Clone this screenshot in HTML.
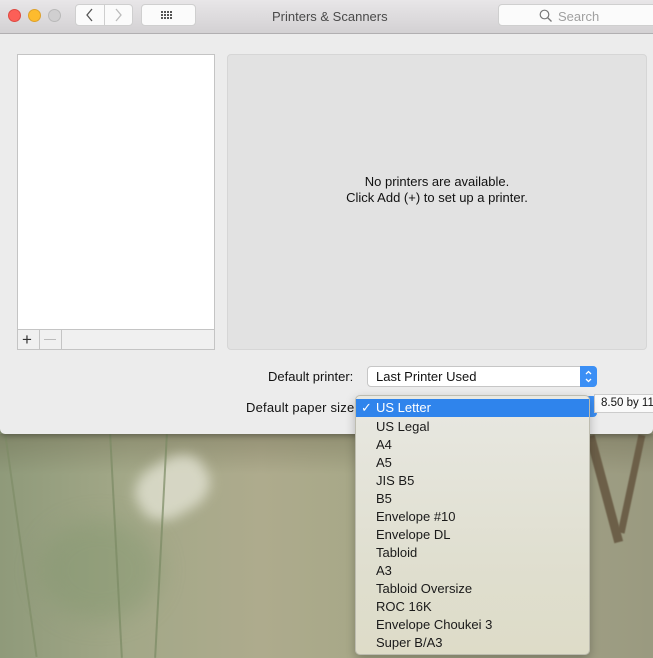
<!DOCTYPE html>
<html><head><meta charset="utf-8"><style>
*{margin:0;padding:0;box-sizing:border-box}
body{width:653px;height:658px;overflow:hidden;position:relative;font-family:"Liberation Sans",sans-serif;font-size:13px;color:#222;
background:linear-gradient(90deg,#8f9a7a 0%,#a3a888 20%,#aeab8d 40%,#a5a786 60%,#a09f84 85%,#9a9a80 100%)}
.abs{position:absolute}
.win{left:0;top:0;width:653px;height:434px;background:#ececec;border-radius:0 0 5px 5px;box-shadow:0 2px 6px rgba(0,0,0,.3)}
.tb{left:0;top:0;width:653px;height:34px;background:linear-gradient(#e8e6e8,#d3d1d3);border-bottom:1px solid #b1afb1}
.dot{width:13px;height:13px;border-radius:50%;top:9px}
.btn{background:#fbfbfb;border:1px solid #cfcfcf;border-radius:4px;height:22px;top:4px}
</style></head><body>
<div class="abs" style="left:0;top:434px;width:653px;height:40px;background:linear-gradient(rgba(100,95,70,.35),rgba(0,0,0,0))"></div>
<div class="abs" style="left:40px;top:520px;width:120px;height:100px;background:rgba(130,150,110,.45);border-radius:50%;filter:blur(12px)"></div>
<div class="abs" style="left:135px;top:460px;width:75px;height:55px;background:rgba(230,230,215,.75);border-radius:40%;filter:blur(6px);transform:rotate(-30deg)"></div>
<div class="abs" style="left:115px;top:434px;width:2px;height:224px;background:#7b8a64;opacity:.7;transform:rotate(-3deg)"></div>
<div class="abs" style="left:160px;top:434px;width:2px;height:224px;background:#7b8a64;opacity:.7;transform:rotate(3deg)"></div>
<div class="abs" style="left:20px;top:434px;width:2px;height:224px;background:#7b8a64;opacity:.6;transform:rotate(-8deg)"></div>
<div class="abs" style="left:600px;top:434px;width:9px;height:110px;background:#6c5f48;transform:rotate(-15deg);filter:blur(.5px)"></div>
<div class="abs" style="left:628px;top:434px;width:7px;height:100px;background:#6c5f48;transform:rotate(12deg);filter:blur(.5px)"></div>
<div class="abs win">
<div class="abs tb">
<div class="abs dot" style="left:8px;background:#fc5f57;border:1px solid #de4a42"></div>
<div class="abs dot" style="left:28px;background:#fdbb2e;border:1px solid #dea12a"></div>
<div class="abs dot" style="left:48px;background:#d0cfd0;border:1px solid #b9b9b9"></div>
<div class="abs btn" style="left:75px;width:58px"></div>
<div class="abs" style="left:104px;top:5px;width:1px;height:20px;background:#cfcfcf"></div>
<svg class="abs" style="left:84px;top:8px" width="12" height="14"><path d="M8 1L3 7L8 13" stroke="#555" fill="none" stroke-width="1.3"/></svg>
<svg class="abs" style="left:112px;top:8px" width="12" height="14"><path d="M4 1L9 7L4 13" stroke="#bbb" fill="none" stroke-width="1.3"/></svg>
<div class="abs btn" style="left:141px;width:55px"></div>
<svg class="abs" style="left:161px;top:11px" width="14" height="10"><g fill="#555"><rect x="0" y="0" width="2" height="2"/><rect x="3" y="0" width="2" height="2"/><rect x="6" y="0" width="2" height="2"/><rect x="9" y="0" width="2" height="2"/><rect x="0" y="3" width="2" height="2"/><rect x="3" y="3" width="2" height="2"/><rect x="6" y="3" width="2" height="2"/><rect x="9" y="3" width="2" height="2"/><rect x="0" y="6" width="2" height="2"/><rect x="3" y="6" width="2" height="2"/><rect x="6" y="6" width="2" height="2"/><rect x="9" y="6" width="2" height="2"/></g></svg>
<div class="abs" style="left:272px;top:9px;color:#4a4a4a">Printers &amp; Scanners</div>
<div class="abs btn" style="left:498px;width:160px"></div>
<svg class="abs" style="left:539px;top:9px" width="14" height="14"><circle cx="5.5" cy="5.5" r="4.3" stroke="#777" fill="none" stroke-width="1.2"/><path d="M8.5 8.5L12.5 12.5" stroke="#777" stroke-width="1.3"/></svg>
<div class="abs" style="left:558px;top:9px;color:#a0a0a0">Search</div>
</div>
<div class="abs" style="left:17px;top:54px;width:198px;height:296px;background:#fff;border:1px solid #c4c4c4"></div>
<div class="abs" style="left:17px;top:329px;width:198px;height:21px;background:#f0f0f0;border:1px solid #c4c4c4"></div>
<div class="abs" style="left:39px;top:330px;width:1px;height:19px;background:#c4c4c4"></div>
<div class="abs" style="left:61px;top:330px;width:1px;height:19px;background:#c4c4c4"></div>
<div class="abs" style="left:22px;top:331px;font-size:17px;line-height:17px;color:#333">+</div>
<div class="abs" style="left:44px;top:339px;width:12px;height:1px;background:#bbb"></div>
<div class="abs" style="left:227px;top:54px;width:420px;height:296px;background:#e2e2e2;border:1px solid #d6d6d6;border-radius:4px"></div>
<div class="abs" style="left:227px;top:174px;width:420px;text-align:center;line-height:16px;color:#111">No printers are available.<br>Click Add (+) to set up a printer.</div>
<div class="abs" style="left:268px;top:369px;color:#111">Default printer:</div>
<div class="abs" style="left:367px;top:366px;width:230px;height:21px;background:#fff;border:1px solid #c6c6c6;border-radius:4px"></div>
<div class="abs" style="left:376px;top:369px;color:#111">Last Printer Used</div>
<div class="abs" style="left:580px;top:366px;width:17px;height:21px;background:#3b8ff5;border-radius:0 4px 4px 0"></div>
<svg class="abs" style="left:583px;top:369px" width="11" height="15"><path d="M3 5L5.5 2.5L8 5M3 10L5.5 12.5L8 10" stroke="#fff" fill="none" stroke-width="1.3"/></svg>
<div class="abs" style="left:246px;top:400px;color:#111;letter-spacing:.2px">Default paper size</div>
<div class="abs" style="left:580px;top:396px;width:17px;height:21px;background:#3b8ff5;border-radius:0 4px 4px 0"></div>
</div>
<div class="abs" style="left:594px;top:394px;width:70px;height:19px;background:#fafafa;border:1px solid #ccc;font-size:11.5px;padding:2px 0 0 6px;color:#111">8.50 by 11</div>
<div class="abs" style="left:355px;top:395px;width:235px;height:260px;background:linear-gradient(#e8e8e2,#dfdece 70%,#dedcc8);border:1px solid #bdbcaf;border-radius:5px;box-shadow:0 4px 10px rgba(0,0,0,.25)"></div>
<div class="abs" style="left:356px;top:399px;width:233px;height:18px;background:#2f84ec"></div>
<div class="abs" style="left:361px;top:400px;color:#fff;font-size:13px">✓</div>
<div class="abs" style="left:376px;top:400px;line-height:18px;color:#1a1a1a;font-size:13px">
<div style="color:#fff;height:18px;line-height:15px">US Letter</div>
<div>US Legal</div><div>A4</div><div>A5</div><div>JIS B5</div><div>B5</div><div>Envelope #10</div><div>Envelope DL</div><div>Tabloid</div><div>A3</div><div>Tabloid Oversize</div><div>ROC 16K</div><div>Envelope Choukei 3</div><div>Super B/A3</div>
</div>
</body></html>
